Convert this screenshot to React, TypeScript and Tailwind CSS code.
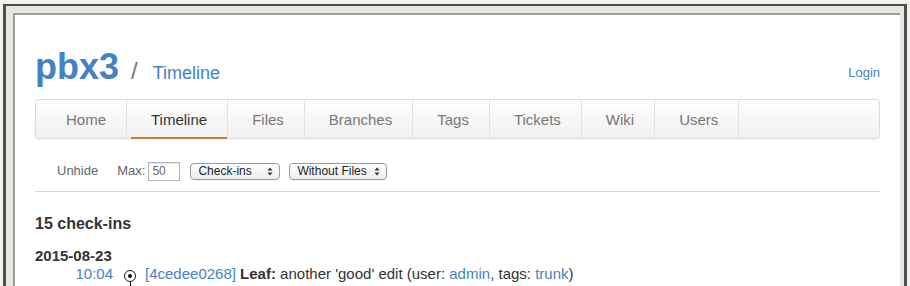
const navItems = ['Home', 'Timeline', 'Files', 'Branches', 'Tags', 'Tickets', 'Wiki', 'Users'];

function Updown() {
  return (
    <svg width="6" height="9" viewBox="0 0 6 9" className="shrink-0">
      <path d="M3 0.5L5.5 3.5H0.5Z" fill="#333" />
      <path d="M3 8.5L5.5 5.5H0.5Z" fill="#333" />
    </svg>
  );
}

function FakeSelect({ label, width }: { label: string; width: string }) {
  return (
    <div
      className={`flex h-[17px] items-center justify-between rounded-[4px] border border-[#9a9a9a] bg-gradient-to-b from-white to-[#ececec] pl-[7px] pr-[6px] text-[12px] leading-none text-[#222] shadow-[0_1px_0_rgba(0,0,0,0.05)] ${width}`}
    >
      <span>{label}</span>
      <Updown />
    </div>
  );
}

export default function App() {
  return (
    <div className="h-[286px] w-[910px] overflow-hidden bg-[#f3f2ef] px-[3px] pt-[4px] font-['Liberation_Sans',Arial,sans-serif]">
      <div className="h-full border-l-[3px] border-r-[3px] border-t-[2px] border-[#4f4f4f] bg-[#e8e6e2] pl-[7px] pr-[4px] pt-[7px]">
        <div className="h-full border-l-2 border-t-2 border-[#9c9c9c] bg-white px-[20px]">
          {/* Header */}
          <div className="flex h-[84px] items-start justify-between overflow-hidden pt-[34px]">
            <div className="flex h-[40px] items-baseline">
              <span className="text-[36px] font-bold leading-[36px] text-[#4682c3]">pbx3</span>
              <span className="ml-[12px] text-[24px] leading-[36px] text-[#777]">/</span>
              <span className="ml-[15px] text-[18px] leading-[36px] text-[#4682c3]">Timeline</span>
            </div>
            <a className="mt-[16px] text-[13px] leading-[16px] text-[#4682c3]">Login</a>
          </div>

          {/* Main menu */}
          <div className="flex h-[40px] rounded-[4px] border border-[#dcdcdc] bg-gradient-to-b from-white to-[#f0f0f0] shadow-[0_1px_2px_rgba(0,0,0,0.05)]">
            {navItems.map((item, i) => (
              <div
                key={item}
                className={`relative flex items-center pt-[2px] text-[15px] ${
                  i === 0 ? 'pl-[30px] pr-[20px]' : 'border-l border-[#e1e1e1] pl-[24px] pr-[20px]'
                } ${i === navItems.length - 1 ? 'border-r' : ''} ${
                  item === 'Timeline' ? 'text-[#333]' : 'text-[#777]'
                }`}
              >
                {item}
                {item === 'Timeline' && (
                  <span className="absolute bottom-[-1px] left-[4px] right-0 h-[2px] bg-[#c9803f]" />
                )}
              </div>
            ))}
          </div>

          {/* Submenu */}
          <div className="mt-[22px] flex h-[20px] items-center pl-[22px] text-[13px] text-[#666]">
            <span>Unhide</span>
            <span className="ml-[19px]">Max:</span>
            <div className="ml-[3px] flex h-[19px] w-[32px] items-center border border-[#b5b5b5] pl-[3px] text-[12px] text-[#666] shadow-[inset_0_1px_1px_rgba(0,0,0,0.1)]">
              50
            </div>
            <div className="ml-[10px]">
              <FakeSelect label="Check-ins" width="w-[90px]" />
            </div>
            <div className="ml-[9px]">
              <FakeSelect label="Without Files" width="w-[98px]" />
            </div>
          </div>

          <div className="mt-[10px] h-px bg-[#d4d4d4]" />

          {/* Timeline */}
          <h2 className="mt-[22px] text-[16px] font-bold leading-[20px] text-[#333]">15 check-ins</h2>
          <div className="mt-[13px] text-[15px] font-bold leading-[18px] text-[#333]">2015-08-23</div>
          <div className="flex text-[15px] leading-[18px] text-[#333]">
            <a className="w-[78px] text-right text-[#4682c3]">10:04</a>
            <div className="ml-[11px] flex w-[12px] flex-col items-center pt-[5px]">
              <div className="flex h-[12px] w-[12px] items-center justify-center rounded-full border border-[#111]">
                <div className="h-[4px] w-[4px] rounded-full bg-[#111]" />
              </div>
              <div className="h-[12px] w-px bg-[#111]" />
            </div>
            <div className="ml-[9px]">
              <a className="text-[#4682c3]">[4cedee0268]</a> <b>Leaf:</b> another 'good' edit (user:{' '}
              <a className="text-[#4682c3]">admin</a>, tags: <a className="text-[#4682c3]">trunk</a>)
            </div>
          </div>
        </div>
      </div>
    </div>
  );
}
